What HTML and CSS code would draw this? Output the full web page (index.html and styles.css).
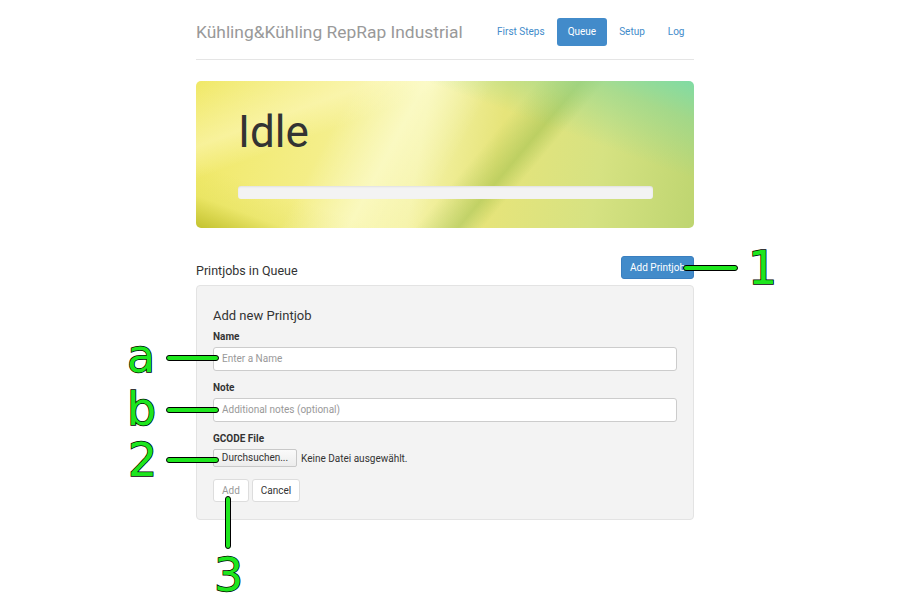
FILE: index.html
```html
<!DOCTYPE html>
<html>
<head>
<meta charset="utf-8">
<link rel="stylesheet" href="styles.css">
</head>
<body>
<div class="page">
  <div class="container">
    <header class="header">
      <div class="brand">Kühling&amp;Kühling RepRap Industrial</div>
      <nav class="nav">
        <a class="pill">First Steps</a>
        <a class="pill active">Queue</a>
        <a class="pill">Setup</a>
        <a class="pill">Log</a>
      </nav>
    </header>

    <section class="jumbo">
      <h1 class="status">Idle</h1>
      <div class="progress"></div>
    </section>

    <div class="queue-head">
      <h3 class="queue-title">Printjobs in Queue</h3>
      <button class="btn btn-primary">Add Printjob</button>
    </div>

    <div class="well">
      <h4 class="form-title">Add new Printjob</h4>
      <div class="group">
        <label class="label">Name</label>
        <div class="input">Enter a Name</div>
      </div>
      <div class="group">
        <label class="label">Note</label>
        <div class="input">Additional notes (optional)</div>
      </div>
      <div class="group last">
        <label class="label">GCODE File</label>
        <div class="file-row">
          <span class="file-btn">Durchsuchen...</span>
          <span class="file-text">Keine Datei ausgewählt.</span>
        </div>
      </div>
      <div class="actions">
        <button class="btn btn-default disabled">Add</button>
        <button class="btn btn-default">Cancel</button>
      </div>
    </div>
  </div>

  <div class="ann-line h line1"></div>
  <div class="ann-num num1">1</div>
  <div class="ann-line h linea"></div>
  <div class="ann-num numa">a</div>
  <div class="ann-line h lineb"></div>
  <div class="ann-num numb">b</div>
  <div class="ann-line h line2"></div>
  <div class="ann-num num2">2</div>
  <div class="ann-line v line3"></div>
  <div class="ann-num num3">3</div>
</div>
</body>
</html>
```

FILE: styles.css
```css
* { box-sizing: border-box; }
html, body { margin: 0; padding: 0; background: #fff; }
body { font-family: Roboto, "Liberation Sans", sans-serif; color: #333; }
.page { position: relative; width: 900px; height: 611px; overflow: hidden; }
.container { width: 498px; margin-left: 196px; }

.header {
  display: flex; align-items: center; justify-content: space-between;
  height: 60px; padding-top: 4px;
  border-bottom: 1px solid #e5e5e5;
}
.brand { font-size: 17.4px; color: #999; }
.nav { display: flex; gap: 2px; margin-right: -1px; }
.pill {
  font-size: 10px; color: #428bca; padding: 0 10.5px; line-height: 12px;
  border-radius: 3px; height: 28px; display: flex; align-items: center;
}
.pill.active { background: #428bca; color: #fff; }

.jumbo {
  margin-top: 21px; height: 147px; border-radius: 5px; padding: 28px 41px 0 42px;
  background:
    linear-gradient(200deg, rgba(120,220,170,0.9) 0%, rgba(140,215,150,0.6) 12%, rgba(200,225,120,0) 30%),
    linear-gradient(118deg, rgba(255,255,255,0) 28%, rgba(255,255,220,0.55) 40%, rgba(255,255,255,0) 52%),
    linear-gradient(130deg, rgba(0,0,0,0) 55%, rgba(120,170,50,0.35) 62%, rgba(0,0,0,0) 66%),
    linear-gradient(160deg, rgba(255,255,255,0) 0%, rgba(255,250,200,0.5) 20%, rgba(255,255,255,0) 30%),
    linear-gradient(20deg, rgba(190,190,40,0.9) 0%, rgba(220,220,80,0.3) 10%, rgba(0,0,0,0) 20%),
    linear-gradient(100deg, #f0e866 0%, #f4ee88 25%, #f5f3a8 45%, #e6e47a 60%, #d6e282 80%, #bed570 100%);
}
.status { margin: 0; font-size: 44px; font-weight: 400; color: #333; line-height: 46px; }
.progress {
  margin-top: 31px; height: 13px; background: #f3f3f3; border-radius: 3px;
  box-shadow: inset 0 1px 2px rgba(0,0,0,0.08);
}

.queue-head {
  display: flex; justify-content: space-between; align-items: flex-end;
  margin-top: 28px; height: 23px;
}
.queue-title { margin: 0; font-size: 12.5px; font-weight: 400; color: #333; line-height: 14px; padding-bottom: 1px; }
.btn {
  font-family: Roboto, "Liberation Sans", sans-serif;
  font-size: 10px; line-height: 12px; padding: 5px 8px; height: 23px;
  border-radius: 3px; border: 1px solid transparent; cursor: pointer; white-space: nowrap;
}
.btn-primary { background: #428bca; color: #fff; border-color: #3a7fc0; min-width: 72px; }
.btn-default { background: #fff; color: #333; border-color: #ddd; }
.btn-default.disabled { color: #999; }

.well {
  margin-top: 6px; background: #f3f3f3; border: 1px solid #e3e3e3; border-radius: 4px;
  padding: 23px 16px 16px 16px; height: 235px;
}
.form-title { margin: 0 0 8px; font-size: 13px; font-weight: 400; color: #333; line-height: 14px; }
.group { margin-bottom: 11px; }
.group.last { margin-bottom: 12px; }
.label { display: block; font-size: 10px; font-weight: 700; color: #333; margin-bottom: 4px; line-height: 12px; }
.input {
  height: 24px; background: #fff; border: 1px solid #ccc; border-radius: 3px;
  font-size: 10px; color: #999; padding: 0 8px; line-height: 22px;
}
.file-row { display: flex; align-items: center; gap: 4px; height: 18px; }
.file-btn {
  font-size: 10px; color: #333; border: 1px solid #c8c8c8; border-radius: 2px;
  background: linear-gradient(#fafafa, #ececec); height: 18px; line-height: 16px;
  width: 84px; text-align: center;
}
.file-text { font-size: 10px; color: #333; }
.actions { display: flex; gap: 3px; }
.actions .btn { padding: 5px 8px; }

.ann-line {
  position: absolute; background: #1ee61e; border: 1.5px solid #000; border-radius: 4px;
}
.ann-line.h { height: 6px; }
.ann-line.v { width: 6px; }
.line1 { left: 683px; top: 265px; width: 55px; }
.linea { left: 166px; top: 355px; width: 53px; }
.lineb { left: 166px; top: 407px; width: 53px; }
.line2 { left: 166px; top: 457px; width: 53px; }
.line3 { left: 225px; top: 496px; height: 53px; }
.ann-num {
  position: absolute; font-family: "DejaVu Sans", sans-serif; font-size: 46px; line-height: 46px;
  color: #1ee61e; -webkit-text-stroke: 1.5px #000; paint-order: stroke fill;
}
.num1 { left: 748px; top: 245px; }
.numa { left: 127px; top: 333px; }
.numb { left: 127px; top: 386px; }
.num2 { left: 128px; top: 437px; }
.num3 { left: 214px; top: 552px; }
```
